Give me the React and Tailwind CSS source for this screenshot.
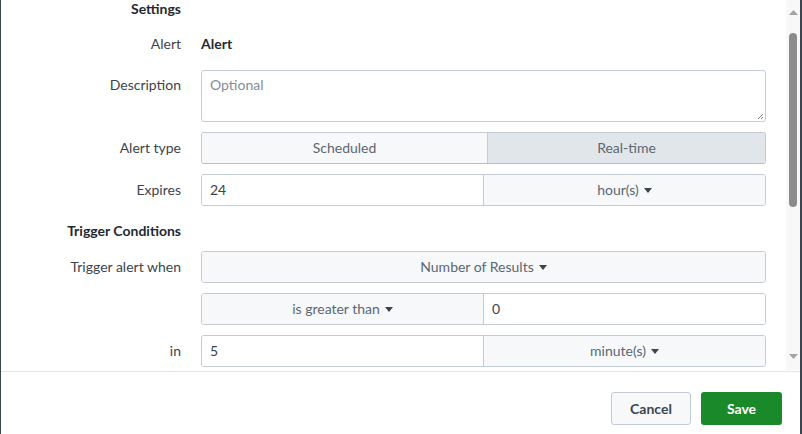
import React from 'react'

const font = { fontFamily: 'Lato, "Open Sans", sans-serif' }

function Caret() {
  return (
    <svg width="8" height="5" viewBox="0 0 8 5" className="ml-[5px] inline-block">
      <path d="M0 0 L8 0 L4 5 Z" fill="#3c444d" />
    </svg>
  )
}

function Row({ label, children, h = 'h-8', top }) {
  return (
    <div className={`flex ${top ? 'items-start' : 'items-center'} ${h}`}>
      <div className={`w-[180px] shrink-0 text-right text-[#3c444d] ${top ? 'pt-[5px]' : ''}`}>
        {label}
      </div>
      <div className="ml-[20px] w-[565px] h-full">{children}</div>
    </div>
  )
}

function SelectBox({ children, className = '' }) {
  return (
    <div className={`h-full flex items-center justify-center bg-[#f7f8fa] text-[#5c6773] ${className}`}>
      {children}
      <Caret />
    </div>
  )
}

function Heading({ children, className = '' }) {
  return (
    <div className={`flex ${className}`}>
      <div className="w-[180px] text-right font-bold text-[#1f2933]">{children}</div>
    </div>
  )
}

export default function App() {
  return (
    <div
      className="w-[802px] h-[434px] bg-white flex flex-col text-[14px] leading-[20px] border-l border-[#3c444d] border-r-2 overflow-hidden"
      style={font}
    >
      {/* body */}
      <div className="h-[371px] flex shrink-0">
        <div className="flex-1 flex flex-col gap-[10px] overflow-hidden">
          <Heading className="h-[18px] items-center">Settings</Heading>

          <Row label="Alert">
            <div className="h-full flex items-center font-bold text-[#1f2933]">Alert</div>
          </Row>

          <Row label="Description" h="h-[52px]" top>
            <div className="relative h-full border border-[#c3cbd4] rounded-[3px] bg-white pl-[8px] pt-[4px] text-[#818d99]">
              Optional
              <svg width="7" height="7" viewBox="0 0 7 7" className="absolute right-[1px] bottom-[1px]">
                <path d="M1 6 L6 1 M4 6 L6 4" stroke="#666" strokeWidth="0.8" />
              </svg>
            </div>
          </Row>

          <Row label="Alert type">
            <div className="h-full flex border border-[#c3cbd4] border-b-[#b5bec8] rounded-[3px] overflow-hidden text-[#5c6773]">
              <div className="w-[286px] flex items-center justify-center bg-[#f7f8fa] border-r border-[#c3cbd4]">
                Scheduled
              </div>
              <div className="flex-1 flex items-center justify-center bg-[#e1e6eb]">Real-time</div>
            </div>
          </Row>

          <Row label="Expires">
            <div className="h-full flex border border-[#c3cbd4] rounded-[3px] overflow-hidden">
              <div className="w-[282px] flex items-center pl-[8px] bg-white text-[#3c444d] border-r border-[#c3cbd4]">24</div>
              <SelectBox className="flex-1">hour(s)</SelectBox>
            </div>
          </Row>

          <Heading className="h-[25px] items-end">Trigger Conditions</Heading>

          <Row label="Trigger alert when">
            <div className="h-full border border-[#c3cbd4] rounded-[3px] overflow-hidden">
              <SelectBox>Number of Results</SelectBox>
            </div>
          </Row>

          <Row label="">
            <div className="h-full flex border border-[#c3cbd4] rounded-[3px] overflow-hidden">
              <SelectBox className="w-[282px] border-r border-[#c3cbd4]">is greater than</SelectBox>
              <div className="flex-1 flex items-center pl-[8px] bg-white text-[#3c444d]">0</div>
            </div>
          </Row>

          <Row label="in">
            <div className="h-full flex border border-[#c3cbd4] rounded-[3px] overflow-hidden">
              <div className="w-[282px] flex items-center pl-[8px] bg-white text-[#3c444d] border-r border-[#c3cbd4]">5</div>
              <SelectBox className="flex-1">minute(s)</SelectBox>
            </div>
          </Row>
        </div>

        {/* scrollbar */}
        <div className="w-[14px] h-[370px] bg-[#f8f8f8] flex flex-col items-center">
          <svg width="9" height="5" viewBox="0 0 9 5" className="mt-[10px]">
            <path d="M0 5 L4.5 0 L9 5 Z" fill="#a3a3a3" />
          </svg>
          <div className="mt-[18px] w-[8px] h-[174px] rounded-[4px] bg-[#8c8c8c]" />
          <div className="flex-1" />
          <svg width="9" height="5" viewBox="0 0 9 5" className="mb-[11px]">
            <path d="M0 0 L9 0 L4.5 5 Z" fill="#a3a3a3" />
          </svg>
        </div>
      </div>

      {/* footer */}
      <div className="flex-1 border-t border-[#e1e6eb] flex items-start justify-end gap-[10px] pr-[18px] pt-[20px]">
        <button className="w-[80px] h-[33px] rounded-[3px] border border-[#c3cbd4] bg-[#f7f8fa] text-[#3c444d] font-bold">
          Cancel
        </button>
        <button className="w-[81px] h-[33px] rounded-[3px] bg-[#1a8929] text-white font-bold">Save</button>
      </div>
    </div>
  )
}
